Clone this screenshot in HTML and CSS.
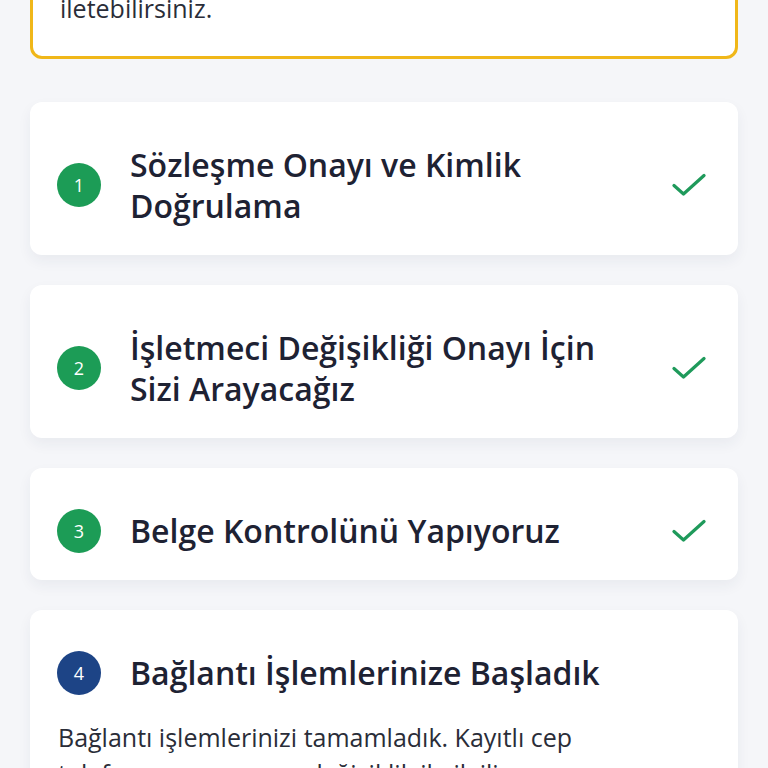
FILE: index.html
```html
<!DOCTYPE html>
<html lang="tr">
<head>
    <meta charset="UTF-8">
    <meta name="viewport" content="width=device-width, initial-scale=1.0">
    <title>Başvuru Durumu</title>
    <link rel="stylesheet" href="styles.css">
</head>
<body>
    <div class="page">
        <div class="notice">
            <p>Sorularınızı müşteri hizmetlerimize<br>iletebilirsiniz.</p>
        </div>

        <div class="step">
            <div class="step-head">
                <span class="step-num done">1</span>
                <h2 class="step-title">Sözleşme Onayı ve Kimlik<br>Doğrulama</h2>
                <svg class="check" viewBox="0 0 34 24" width="34" height="24"><path d="M2 12.5 L11.5 21 L32 2.5" /></svg>
            </div>
        </div>

        <div class="step">
            <div class="step-head">
                <span class="step-num done">2</span>
                <h2 class="step-title">İşletmeci Değişikliği Onayı İçin<br>Sizi Arayacağız</h2>
                <svg class="check" viewBox="0 0 34 24" width="34" height="24"><path d="M2 12.5 L11.5 21 L32 2.5" /></svg>
            </div>
        </div>

        <div class="step">
            <div class="step-head">
                <span class="step-num done">3</span>
                <h2 class="step-title">Belge Kontrolünü Yapıyoruz</h2>
                <svg class="check" viewBox="0 0 34 24" width="34" height="24"><path d="M2 12.5 L11.5 21 L32 2.5" /></svg>
            </div>
        </div>

        <div class="step">
            <div class="step-head">
                <span class="step-num active">4</span>
                <h2 class="step-title">Bağlantı İşlemlerinize Başladık</h2>
            </div>
            <p class="step-text">Bağlantı işlemlerinizi tamamladık. Kayıtlı cep telefonu numaranıza değişiklik ile ilgili bilgilendirme mesajı gönderdik.</p>
        </div>
    </div>
</body>
</html>
```

FILE: styles.css
```css
html, body {
    margin: 0;
    padding: 0;
}
body {
    background: #f5f6f9;
    font-family: "Open Sans", "Noto Sans", sans-serif;
    color: #1e2233;
}
.page {
    padding: 0 30px 40px;
    margin-top: -63px;
}
.notice {
    background: #fff;
    border: 3px solid #f0b719;
    border-radius: 12px;
    padding: 20px 27px 32px;
}
.notice p {
    margin: 0;
    font-size: 25px;
    line-height: 32px;
    color: #2a2d38;
}
.step {
    background: #fff;
    border-radius: 12px;
    padding: 42px 32px 29px 27px;
    margin-top: 30px;
    box-shadow: 0 6px 14px rgba(30, 45, 80, 0.06);
}
.notice + .step {
    margin-top: 43px;
}
.step-head {
    display: flex;
    align-items: center;
}
.step-num {
    flex: none;
    width: 44px;
    height: 44px;
    margin: -2px 0;
    border-radius: 50%;
    color: #fff;
    font-size: 18px;
    display: flex;
    align-items: center;
    justify-content: center;
}
.step-num.done {
    background: #1c9c56;
}
.step-num.active {
    background: #1d4486;
}
.step-title {
    flex: 1;
    margin: 0 0 0 29px;
    font-size: 32px;
    font-weight: 600;
    line-height: 41px;
    color: #1e2233;
}
.check {
    flex: none;
    fill: none;
    stroke: #1f9a5b;
    stroke-width: 3.2;
    stroke-linecap: round;
    stroke-linejoin: round;
}
.step-text {
    max-width: 560px;
    margin: 26px 0 0 1px;
    font-size: 25px;
    line-height: 36px;
    color: #2a2d38;
}
```
